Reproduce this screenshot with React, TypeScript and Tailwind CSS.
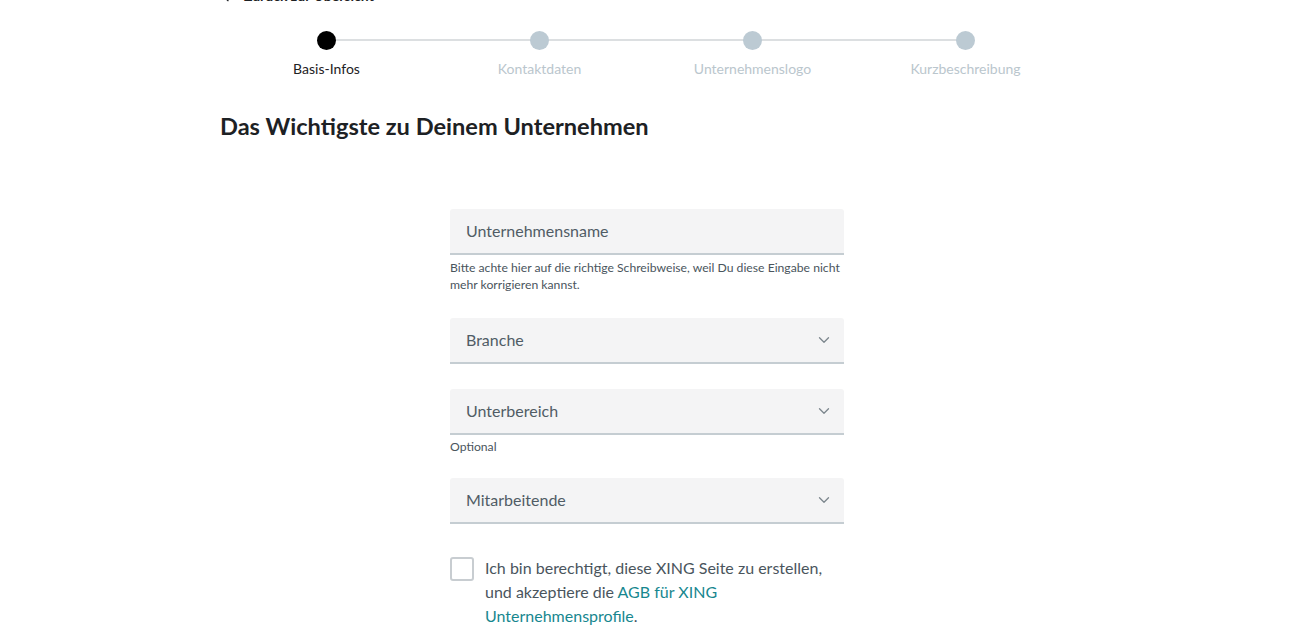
import { ArrowLeft, ChevronDown } from "lucide-react"

const steps = ["Basis-Infos", "Kontaktdaten", "Unternehmenslogo", "Kurzbeschreibung"]

function SelectField({ label }: { label: string }) {
  return (
    <div className="flex h-[46px] items-center justify-between rounded-t-[3px] border-b-2 border-[#c5cdd2] bg-[#f4f4f5] pl-4 pr-[11px] text-[16px] text-[#505c65]">
      <span>{label}</span>
      <ChevronDown className="h-[18px] w-[18px] text-[#7c868d]" strokeWidth={1.75} />
    </div>
  )
}

export default function App() {
  return (
    <div className="min-h-screen bg-white text-[#1d2124]" style={{ fontFamily: "Lato, 'Noto Sans', sans-serif" }}>
      <div className="ml-[220px] w-[852px]">
        <a className="-mt-[13px] flex h-[18px] items-center gap-2 text-[14px] font-bold leading-[18px] text-[#1d2124]">
          <ArrowLeft className="h-4 w-4" />
          Zurück zur Übersicht
        </a>

        <div className="relative mt-[26px] grid grid-cols-4">
          <div className="absolute left-[106px] right-[106px] top-[8px] h-[2px] bg-[#dcdfe1]" />
          {steps.map((step, idx) => (
            <div key={step} className="relative flex flex-col items-center">
              <div className={`h-[19px] w-[19px] rounded-full ${idx === 0 ? "bg-black" : "bg-[#bccad3]"}`} />
              <span className={`mt-[9px] text-[14px] leading-5 ${idx === 0 ? "text-[#1d2124]" : "text-[#bac6cd]"}`}>{step}</span>
            </div>
          ))}
        </div>

        <h1 className="mt-[31px] text-[23.6px] font-bold leading-8 text-[#1d2124]">Das Wichtigste zu Deinem Unternehmen</h1>

        <form className="ml-[230px] mt-[67px] w-[394px]">
          <div className="flex h-[46px] items-center rounded-t-[3px] border-b-2 border-[#c5cdd2] bg-[#f4f4f5] px-4 text-[16px] text-[#505c65]">
            Unternehmensname
          </div>
          <p className="mt-[4px] text-[12.2px] leading-[17px] text-[#4a555d]">
            Bitte achte hier auf die richtige Schreibweise, weil Du diese Eingabe nicht mehr korrigieren kannst.
          </p>

          <div className="mt-[25px]">
            <SelectField label="Branche" />
          </div>

          <div className="mt-[25px]">
            <SelectField label="Unterbereich" />
          </div>
          <p className="mt-[3px] text-[12.2px] leading-[17px] text-[#4a555d]">Optional</p>

          <div className="mt-[23px]">
            <SelectField label="Mitarbeitende" />
          </div>

          <label className="mt-[32px] flex gap-[11px]">
            <span className="mt-[1px] h-6 w-6 shrink-0 rounded-[3px] border-2 border-[#c8cdd1] bg-white" />
            <span className="text-[16px] leading-6 text-[#4a555d]">
              Ich bin berechtigt, diese XING Seite zu erstellen, und akzeptiere die{" "}
              <span className="text-[#17878f]">AGB für XING Unternehmensprofile</span>.
            </span>
          </label>
        </form>
      </div>
    </div>
  )
}
